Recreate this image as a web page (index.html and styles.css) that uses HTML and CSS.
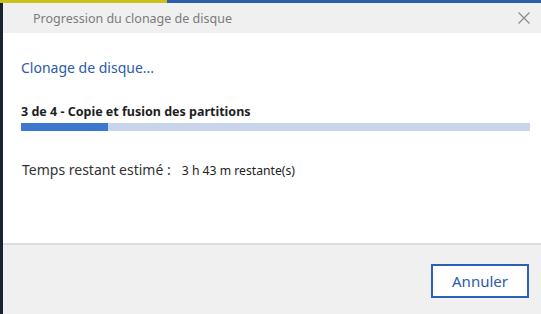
FILE: index.html
```html
<!DOCTYPE html>
<html lang="fr">
<head>
    <meta charset="UTF-8">
    <title>Progression du clonage de disque</title>
    <link rel="stylesheet" href="styles.css">
</head>
<body>
    <div class="screen">
        <div class="edge-top">
            <div class="edge-yellow"></div>
            <div class="edge-blue"></div>
        </div>
        <div class="window">
            <div class="titlebar">
                <span class="title">Progression du clonage de disque</span>
                <svg class="close" width="12" height="12" viewBox="0 0 12 12">
                    <path d="M0.5 0.5 L11.5 11.5 M11.5 0.5 L0.5 11.5" stroke="#8a8a8a" stroke-width="1.2" fill="none"/>
                </svg>
            </div>
            <div class="content">
                <div class="heading">Clonage de disque...</div>
                <div class="step">3 de 4 - Copie et fusion des partitions</div>
                <div class="progress">
                    <div class="progress-fill" style="width: 17%"></div>
                </div>
                <div class="remaining">
                    <span class="label">Temps restant estimé :</span>
                    <span class="value">3 h 43 m restante(s)</span>
                </div>
            </div>
            <div class="footer">
                <button class="cancel">Annuler</button>
            </div>
        </div>
    </div>
</body>
</html>
```

FILE: styles.css
```css
html, body {
    margin: 0;
    padding: 0;
}
body {
    width: 541px;
    height: 314px;
    overflow: hidden;
    font-family: "Noto Sans", "Open Sans", sans-serif;
    background-color: #1b2330;
}
.screen {
    display: flex;
    flex-direction: column;
    height: 314px;
    padding-left: 3px;
    box-sizing: border-box;
    background-color: #1b2330;
}
.edge-top {
    display: flex;
    height: 3px;
    margin-left: -3px;
}
.edge-yellow {
    width: 167px;
    background-color: #c9c21a;
}
.edge-blue {
    flex: 1;
    background-color: #2a5ea8;
}
.window {
    flex: 1;
    display: flex;
    flex-direction: column;
    background-color: #fff;
}
.titlebar {
    height: 30px;
    display: flex;
    align-items: center;
    justify-content: space-between;
    padding: 0 11px 0 30px;
    background-color: #f0f0f0;
}
.title {
    font-size: 12.5px;
    color: #7b7b7b;
}
.content {
    height: 210px;
    padding: 0 11px 0 18px;
    background-color: #fff;
}
.heading {
    margin-top: 25px;
    font-size: 14px;
    color: #2d5aa9;
}
.step {
    margin-top: 26px;
    font-size: 12.5px;
    font-weight: bold;
    color: #1e1e1e;
}
.progress {
    margin-top: 3px;
    height: 8px;
    background-color: #c9d5ea;
}
.progress-fill {
    height: 100%;
    background-color: #3c78cd;
}
.remaining {
    margin-top: 29px;
    display: flex;
    align-items: baseline;
    gap: 11px;
    padding-left: 1px;
}
.label {
    font-size: 14px;
    color: #333;
}
.value {
    font-size: 12.2px;
    color: #222;
}
.footer {
    flex: 1;
    display: flex;
    justify-content: flex-end;
    align-items: flex-start;
    padding: 19px 12px 0 0;
    border-top: 2px solid #dcdcdc;
    background-color: #f0f0f0;
}
.cancel {
    width: 98px;
    height: 34px;
    border: 2px solid #2b5fb8;
    background-color: #fff;
    color: #2b5aa8;
    font-family: "Noto Sans", "Open Sans", sans-serif;
    font-size: 15px;
}
```
